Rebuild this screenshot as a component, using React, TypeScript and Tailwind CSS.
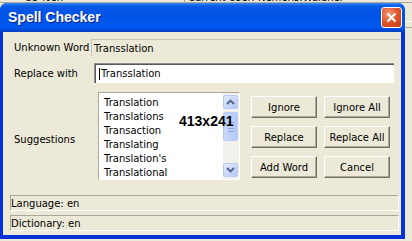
import React from 'react';

const suggestions = ['Translation', 'Translations', 'Transaction', 'Translating', "Translation's", 'Translational'];

const buttons = ['Ignore', 'Ignore All', 'Replace', 'Replace All', 'Add Word', 'Cancel'];

const Chevron: React.FC<{ up?: boolean }> = ({ up }) => (
  <svg width="9" height="6" viewBox="0 0 9 6" className="text-[#4d6185]">
    <path d={up ? 'M1 5 L4.5 1.5 L8 5' : 'M1 1 L4.5 4.5 L8 1'} fill="none" stroke="currentColor" strokeWidth="1.8" />
  </svg>
);

const ScrollButton: React.FC<{ up?: boolean }> = ({ up }) => (
  <div className="flex h-[14px] w-[15px] items-center justify-center rounded-[2px] border border-[#b7cbf6] bg-gradient-to-br from-[#e3ebfe] to-[#b5c8f6]">
    <Chevron up={up} />
  </div>
);

export default function App() {
  return (
    <div className="flex h-[241px] w-[412px] flex-col overflow-hidden bg-[#ece9d8] font-['DejaVu_Sans',sans-serif] text-[10px] text-black">
      {/* the app behind the dialog */}
      <div className="flex h-[3px] shrink-0 overflow-hidden border-b border-[#aca899]">
        <span className="-mt-[8px] ml-[25px] w-[159px] leading-[12px]">de-%en</span>
        <span className="-mt-[8px] border-l border-[#aca899] pl-[3px] leading-[12px]">Current User: Nemeris.Waldner</span>
      </div>

      <div className="flex">
        <div className="flex h-[236px] w-[405px] shrink-0 flex-col overflow-hidden rounded-t-[7px] bg-[#0831d9]">
          <div className="flex h-[29px] shrink-0 items-center justify-between bg-[linear-gradient(to_bottom,#3c8cf6_0%,#0a5ae8_10%,#0052e6_45%,#0058ee_85%,#003fc4_100%)] pl-[8px] pr-[3px]">
            <span className="font-['Liberation_Sans',sans-serif] text-[14px] font-bold text-white [text-shadow:1px_1px_#0a1f8c]">
              Spell Checker
            </span>
            <div className="flex h-[21px] w-[21px] items-center justify-center rounded-[3px] border border-white bg-[radial-gradient(circle_at_35%_30%,#f29a7c_0%,#e2592f_45%,#c3390f_100%)]">
              <svg width="11" height="11" viewBox="0 0 11 11">
                <path d="M1.5 1.5 L9.5 9.5 M9.5 1.5 L1.5 9.5" stroke="white" strokeWidth="2" />
              </svg>
            </div>
          </div>

          <div className="flex flex-1 flex-col border-b-[4px] border-l-[3px] border-r-[4px] border-[#0831d9] bg-[#ece9d8]">
            <div className="mt-[7px] flex h-[17px] items-center pl-[11px]">
              <span className="w-[77px]">Unknown Word</span>
              <div className="mr-[1px] flex h-full flex-1 items-center border-l border-t border-[#c9c6b6] pl-[2px]">Transslation</div>
            </div>

            <div className="mt-[7px] flex h-[20px] items-center pl-[11px]">
              <span className="w-[80px]">Replace with</span>
              <div className="flex h-full w-[300px] items-center border-l border-t border-[#8f8f8f] bg-white pl-[4px] shadow-[inset_1px_1px_#5a5a5a]">
                <span className="mr-[1px] h-[12px] w-px bg-black" />
                Transslation
              </div>
            </div>

            <div className="mt-[9px] flex pl-[11px]">
              <span className="w-[84px] self-center pt-[7px]">Suggestions</span>
              <div className="relative flex h-[88px] w-[142px] border border-b-white border-l-[#aca899] border-r-white border-t-[#aca899] bg-white">
                <div className="flex flex-1 flex-col pl-[5px] pt-[3px] leading-[14px]">
                  {suggestions.map((s) => (
                    <span key={s}>{s}</span>
                  ))}
                </div>
                <div className="flex w-[16px] flex-col justify-between bg-[#f3f1ec] py-[2px]">
                  <div className="flex flex-col gap-[3px]">
                    <ScrollButton up />
                    <div className="flex h-[29px] w-[15px] flex-col items-center justify-center gap-[2px] rounded-[2px] border border-[#b7cbf6] bg-gradient-to-r from-[#c9d8fc] to-[#b5c8f6]">
                      <span className="h-px w-[6px] bg-[#8ca2e0]" />
                      <span className="h-px w-[6px] bg-[#8ca2e0]" />
                      <span className="h-px w-[6px] bg-[#8ca2e0]" />
                      <span className="h-px w-[6px] bg-[#8ca2e0]" />
                    </div>
                  </div>
                  <ScrollButton />
                </div>
                <span className="absolute left-[80px] top-[18px] font-['Liberation_Sans',sans-serif] text-[14px] font-bold">413x241</span>
              </div>

              <div className="ml-[11px] mt-[4px] grid grid-cols-[66px_66px] gap-x-[7px] gap-y-[6px]">
                {buttons.map((b) => (
                  <div
                    key={b}
                    className="flex h-[22px] items-center justify-center border border-b-[#716f64] border-l-white border-r-[#716f64] border-t-white bg-[#ece9d8] shadow-[inset_-1px_-1px_#aca899]"
                  >
                    {b}
                  </div>
                ))}
              </div>
            </div>

            <div className="ml-[7px] mt-[15px] flex h-[16px] w-[389px] items-center border border-b-white border-l-[#aca899] border-r-white border-t-[#aca899]">
              Language: en
            </div>
            <div className="ml-[7px] mt-[4px] flex h-[16px] w-[389px] items-center border border-b-white border-l-[#aca899] border-r-white border-t-[#aca899]">
              Dictionary: en
            </div>
          </div>
        </div>
        {/* strip of the app behind, right of the dialog */}
        <div className="mt-[18px] flex flex-1 flex-col gap-[5px]">
          <span className="h-px bg-white" />
          <span className="h-px bg-[#aca899]" />
        </div>
      </div>
    </div>
  );
}
